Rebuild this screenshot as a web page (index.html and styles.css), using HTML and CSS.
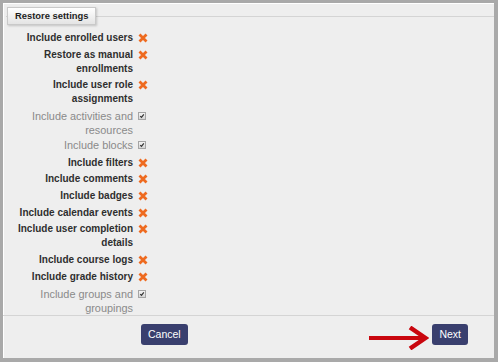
FILE: index.html
```html
<!doctype html>
<html lang="en">
  <head>
    <meta charset="UTF-8" />
    <title>Restore settings</title>
    <link rel="stylesheet" href="styles.css">
  </head>
  <body>
    <div class="window">
      <fieldset class="settings">
        <legend class="tab">Restore settings</legend>
        <div class="rows">
          <div class="row"><span class="label">Include enrolled users</span><svg class="icon cross" viewBox="0 0 10 10"><path d="M1.5 1.5L8.5 8.5M8.5 1.5L1.5 8.5"/></svg></div>
          <div class="row"><span class="label">Restore as manual enrollments</span><svg class="icon cross" viewBox="0 0 10 10"><path d="M1.5 1.5L8.5 8.5M8.5 1.5L1.5 8.5"/></svg></div>
          <div class="row"><span class="label">Include user role assignments</span><svg class="icon cross" viewBox="0 0 10 10"><path d="M1.5 1.5L8.5 8.5M8.5 1.5L1.5 8.5"/></svg></div>
          <div class="row locked"><span class="label">Include activities and resources</span><span class="check"><svg viewBox="0 0 8 8"><path d="M1.6 4.2L3.3 5.8L6.4 1.8"/></svg></span></div>
          <div class="row locked"><span class="label">Include blocks</span><span class="check"><svg viewBox="0 0 8 8"><path d="M1.6 4.2L3.3 5.8L6.4 1.8"/></svg></span></div>
          <div class="row"><span class="label">Include filters</span><svg class="icon cross" viewBox="0 0 10 10"><path d="M1.5 1.5L8.5 8.5M8.5 1.5L1.5 8.5"/></svg></div>
          <div class="row"><span class="label">Include comments</span><svg class="icon cross" viewBox="0 0 10 10"><path d="M1.5 1.5L8.5 8.5M8.5 1.5L1.5 8.5"/></svg></div>
          <div class="row"><span class="label">Include badges</span><svg class="icon cross" viewBox="0 0 10 10"><path d="M1.5 1.5L8.5 8.5M8.5 1.5L1.5 8.5"/></svg></div>
          <div class="row"><span class="label">Include calendar events</span><svg class="icon cross" viewBox="0 0 10 10"><path d="M1.5 1.5L8.5 8.5M8.5 1.5L1.5 8.5"/></svg></div>
          <div class="row"><span class="label">Include user completion details</span><svg class="icon cross" viewBox="0 0 10 10"><path d="M1.5 1.5L8.5 8.5M8.5 1.5L1.5 8.5"/></svg></div>
          <div class="row"><span class="label">Include course logs</span><svg class="icon cross" viewBox="0 0 10 10"><path d="M1.5 1.5L8.5 8.5M8.5 1.5L1.5 8.5"/></svg></div>
          <div class="row"><span class="label">Include grade history</span><svg class="icon cross" viewBox="0 0 10 10"><path d="M1.5 1.5L8.5 8.5M8.5 1.5L1.5 8.5"/></svg></div>
          <div class="row locked"><span class="label">Include groups and groupings</span><span class="check"><svg viewBox="0 0 8 8"><path d="M1.6 4.2L3.3 5.8L6.4 1.8"/></svg></span></div>
        </div>
      </fieldset>

      <div class="footer">
        <button class="btn">Cancel</button>
        <!-- red pointer to the Next button -->
        <svg class="arrow" viewBox="0 0 60 24"><path class="shaft" d="M0 12H55"/><path class="head" d="M41 1.5L56.5 12L41 22.5"/></svg>
        <button class="btn">Next</button>
      </div>
    </div>
  </body>
</html>
```

FILE: styles.css
```css
body { margin: 0; background-color: #a9a9a9; font-family: "Liberation Sans", Arial, sans-serif; }

.window {
  box-sizing: border-box;
  height: 362px;
  display: flex;
  flex-direction: column;
  border: solid #a9a9a9;
  border-width: 3px 4px 4px 3px;
  background-color: #eeeeee;
  box-shadow: inset 1px 1px 0 #ffffff;
}

/* --- Settings block --- */
.settings {
  flex: 1;
  margin: 4px 0 0 3px;
  padding: 6px 0 0 9px;
  border: none;
  border-top: 1px solid #d4d4d4;
  min-width: 0;
}
.tab {
  margin-left: -8px;
  padding: 0 7px;
  line-height: 16px;
  font-size: 9.4px;
  font-weight: bold;
  color: #1e1e1e;
  background: linear-gradient(#ffffff, #e4e4e4);
  border: 1px solid #c9c9c9;
  box-shadow: 1px 1px 2px rgba(0,0,0,0.18);
}
.rows {
  display: flex;
  flex-direction: column;
  gap: 2.7px;
}
.row {
  display: flex;
  align-items: flex-start;
  gap: 5px;
}
.locked + .locked { margin-top: -1.5px; }
.locked + .row:not(.locked) { margin-top: 0.8px; }
.label {
  width: 118px;
  text-align: right;
  font-size: 10px;
  line-height: 14px;
  font-weight: bold;
  color: #2e2e2e;
}
.locked .label {
  font-size: 10.9px;
  font-weight: normal;
  color: #8a8a8a;
}
.icon {
  width: 10px;
  height: 10px;
  margin-top: 2px;
}
.cross path {
  stroke: #ee6a1f;
  stroke-width: 2.8;
  fill: none;
}
.check {
  box-sizing: border-box;
  width: 8px;
  height: 8px;
  margin-top: 3px;
  border: 1px solid #a5a5a5;
  background: linear-gradient(#f4f4f4, #d6d6d6);
  display: flex;
}
.check svg { width: 100%; height: 100%; }
.check path {
  stroke: #333;
  stroke-width: 1.6;
  fill: none;
}

/* --- Footer --- */
.footer {
  display: flex;
  align-items: flex-start;
  height: 39px;
  padding: 8px 26px 0 138px;
  border-top: 1px solid #d4d4d4;
}
.btn {
  height: 21px;
  padding: 0 7px;
  font-family: inherit;
  font-size: 10.5px;
  color: #ffffff;
  background-color: #393f6e;
  border: none;
  border-radius: 3px;
}
.arrow {
  width: 60px;
  height: 24px;
  margin: 2px 3px 0 auto;
}
.arrow path {
  fill: none;
  stroke: #c9060e;
}
.arrow .shaft { stroke-width: 4; }
.arrow .head { stroke-width: 4.5; }
```
